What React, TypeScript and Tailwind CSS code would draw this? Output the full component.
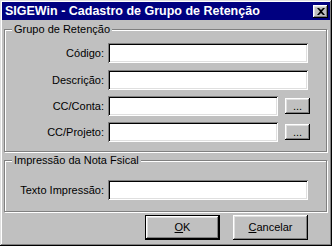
import React from 'react';

const font = { fontFamily: '"Liberation Sans", Arial, sans-serif' };

const sunken =
  'bg-white shadow-[inset_1px_1px_#808080,inset_-1px_-1px_#fff,inset_2px_2px_#000,inset_-2px_-2px_#dfdfdf]';
const raised =
  'bg-[#c0c0c0] shadow-[inset_-1px_-1px_#000,inset_1px_1px_#fff,inset_-2px_-2px_#808080,inset_2px_2px_#dfdfdf]';
const etched = 'border border-[#808080] shadow-[inset_1px_1px_#fff,1px_1px_#fff]';

const Field: React.FC<{ label: string; width: string; browse?: boolean; top: string }> = ({ label, width, browse, top }) => (
  <div className={`flex items-center h-[20px] ${top}`}>
    <span className="w-[99px] text-right text-[11px] text-black leading-none">{label}</span>
    <div className={`ml-[4px] h-[20px] ${width} ${sunken}`} />
    {browse && (
      <button className={`ml-[7px] w-[25px] h-[16px] flex items-end justify-center pb-[2px] text-[11px] leading-none text-black ${raised}`}>
        ...
      </button>
    )}
  </div>
);

const App: React.FC = () => {
  return (
    <div
      style={font}
      className="w-[332px] h-[246px] bg-[#c0c0c0] p-[2px] flex flex-col select-none shadow-[inset_-1px_-1px_#000,inset_1px_1px_#dfdfdf,inset_-2px_-2px_#808080,inset_2px_2px_#fff]"
    >
      {/* title bar */}
      <div className="h-[18px] bg-[#000080] flex items-center pl-[3px] pr-[2px] shrink-0">
        <span className="text-white font-bold text-[12.5px] leading-none flex-1">SIGEWin - Cadastro de Grupo de Retenção</span>
        <div className={`w-[15px] h-[13px] flex items-center justify-center ${raised}`}>
          <svg width="8" height="7" viewBox="0 0 8 7">
            <path d="M0 0h2l2 2 2-2h2L5 3.5 8 7H6L4 5 2 7H0l3-3.5z" fill="#000" />
          </svg>
        </div>
      </div>

      <div className="pl-[2px] pr-[3px] flex flex-col">
        <fieldset className={`mt-[2px] h-[130px] ${etched}`}>
          <legend className="ml-[7px] px-[2px] text-[11px] leading-[14px] bg-[#c0c0c0] text-black">Grupo de Retenção</legend>
          <Field label="Código:" width="w-[200px]" top="mt-[7px]" />
          <Field label="Descrição:" width="w-[200px]" top="mt-[7px]" />
          <Field label="CC/Conta:" width="w-[170px]" browse top="mt-[6px]" />
          <Field label="CC/Projeto:" width="w-[170px]" browse top="mt-[6px]" />
        </fieldset>

        <fieldset className={`mt-[1px] h-[59px] ${etched}`}>
          <legend className="ml-[7px] px-[2px] text-[11px] leading-[14px] bg-[#c0c0c0] text-black">Impressão da Nota Fsical</legend>
          <Field label="Texto Impressão:" width="w-[200px]" top="mt-[13px]" />
        </fieldset>

        <div className="flex mt-[3px] pl-[141px]">
          <button className="w-[75px] h-[25px] border border-black text-[11px] text-black">
            <div className={`w-full h-full flex items-center justify-center ${raised}`}>
              <span><span className="underline">O</span>K</span>
            </div>
          </button>
          <button className={`ml-[13px] w-[75px] h-[25px] flex items-center justify-center text-[11px] text-black ${raised}`}>
            <span><span className="underline">C</span>ancelar</span>
          </button>
        </div>
      </div>
    </div>
  );
};

export default App;
